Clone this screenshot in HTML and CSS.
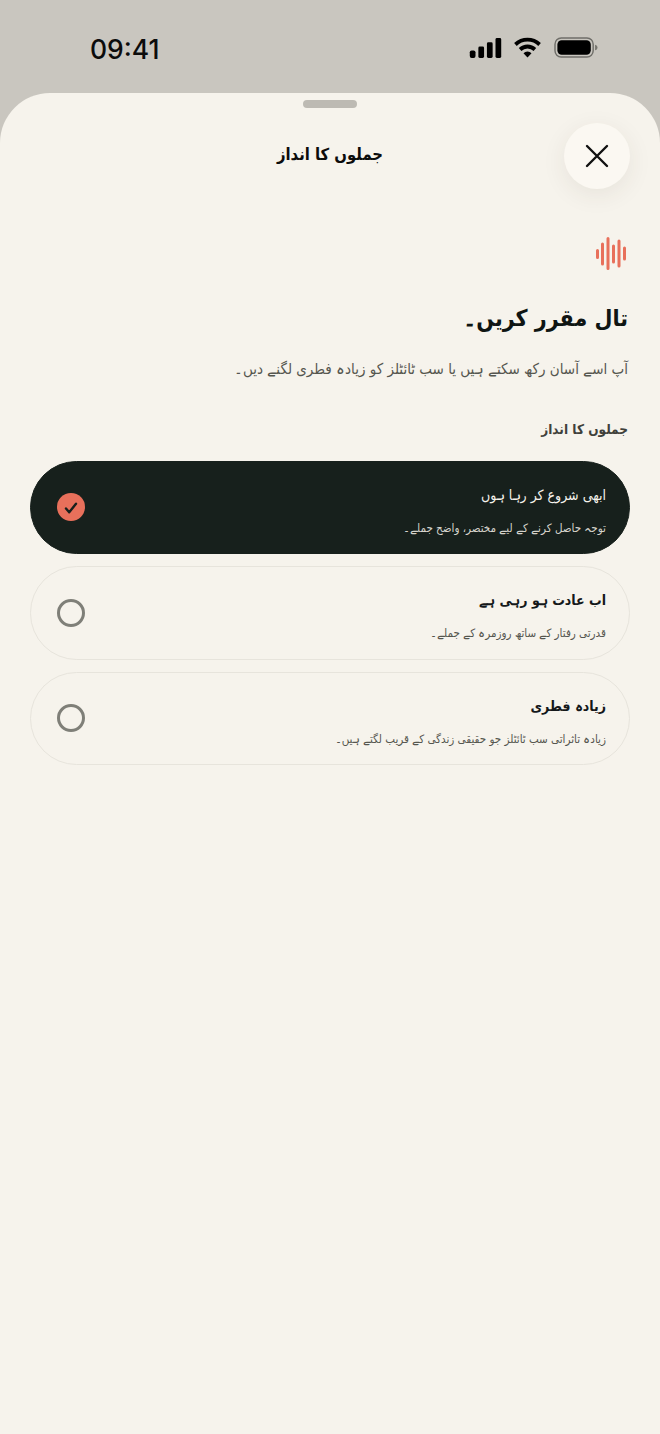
FILE: index.html
```html
<!DOCTYPE html>
<html lang="ur">
<head>
<meta charset="utf-8">
<title>جملوں کا انداز</title>
<link rel="stylesheet" href="styles.css">
</head>
<body>
<div class="screen">
  <header class="status">
    <span class="time">09:41</span>
    <div class="status-icons">
      <svg class="signal" viewBox="0 0 33 21" width="33" height="20"><rect x="0" y="13" width="6" height="8" rx="2"/><rect x="9" y="9" width="6" height="12" rx="1.500"/><rect x="18" y="4.500" width="6" height="16.500" rx="1.500"/><rect x="27" y="0" width="6" height="21" rx="1.500"/></svg>
      <svg class="wifi" viewBox="0 0 30 22" width="29" height="21"><path d="M15 21.500l-4.200-4.600a6 6 0 0 1 8.400 0z"/><path d="M8.600 14.600l-2.700-3a13 13 0 0 1 18.200 0l-2.700 3a9 9 0 0 0-12.800 0z"/><path d="M3.700 9.300L1 6.400a20 20 0 0 1 28 0l-2.700 2.900a16 16 0 0 0-22.600 0z"/></svg>
      <svg class="battery" viewBox="0 0 46 22" width="46" height="21"><rect x="1" y="1" width="40" height="20" rx="6.500" fill="none" stroke="#6f6e69" stroke-width="1.500"/><rect x="3.500" y="3.500" width="35" height="15" rx="4.500"/><path d="M43 8c1.600.4 2.500 1.600 2.500 3s-.9 2.600-2.500 3z" fill="#77766f"/></svg>
    </div>
  </header>
  <main class="sheet">
    <div class="grabber"></div>
    <div class="topbar">
      <h1 class="sheet-title">جملوں کا انداز</h1>
      <button class="close" aria-label="بند کریں">
        <svg viewBox="0 0 26 26" width="26" height="26"><path d="M3 3l20 20M23 3L3 23"/></svg>
      </button>
    </div>
    <section class="content">
      <svg class="wave" viewBox="0 0 30 34" width="30" height="34"><path d="M1.500 13.500v7M6.500 7v20M12 1.500v30M17.500 9v16M23 4v25M28.500 11v11"/></svg>
      <h2 class="heading">تال مقرر کریں۔</h2>
      <p class="sub">آپ اسے آسان رکھ سکتے ہیں یا سب ٹائٹلز کو زیادہ فطری لگنے دیں۔</p>
      <h3 class="label">جملوں کا انداز</h3>
      <div class="options">
        <div class="option selected">
          <div class="text">
            <div class="opt-title">ابھی شروع کر رہا ہوں</div>
            <div class="opt-desc">توجہ حاصل کرنے کے لیے مختصر، واضح جملے۔</div>
          </div>
          <span class="check"><svg viewBox="0 0 16 16" width="16" height="16"><path d="M3 9.500l3.200 3.800L13 4.800"/></svg></span>
        </div>
        <div class="option">
          <div class="text">
            <div class="opt-title">اب عادت ہو رہی ہے</div>
            <div class="opt-desc">قدرتی رفتار کے ساتھ روزمرہ کے جملے۔</div>
          </div>
          <span class="radio"></span>
        </div>
        <div class="option">
          <div class="text">
            <div class="opt-title">زیادہ فطری</div>
            <div class="opt-desc">زیادہ تاثراتی سب ٹائٹلز جو حقیقی زندگی کے قریب لگتے ہیں۔</div>
          </div>
          <span class="radio"></span>
        </div>
      </div>
    </section>
  </main>
</div>
</body>
</html>
```
FILE: styles.css
```css
* { box-sizing: border-box; margin: 0; padding: 0; }
html, body { height: 100%; }
body {
  background: #c9c6bf;
  font-family: "DejaVu Sans Condensed", "DejaVu Sans", "Noto Sans", sans-serif;
  color: #111;
}
.screen { width: 660px; height: 1434px; display: flex; flex-direction: column; overflow: hidden; }
.status {
  height: 93px;
  flex: none;
  display: flex;
  justify-content: space-between;
  align-items: flex-start;
  padding: 33px 61px 0 90px;
}
.time { font: 500 26.500px/32px Inter, "Liberation Sans", sans-serif; color: #0c0c0c; }
.status-icons { display: flex; align-items: center; gap: 11px; margin-top: 4px; }
.status-icons svg { display: block; fill: #000; }
.sheet {
  flex: 1;
  background: #f6f3ec;
  border-radius: 50px 50px 0 0;
  padding: 7px 30px 0;
  display: flex;
  flex-direction: column;
}
.grabber { width: 54px; height: 8px; border-radius: 4px; background: #bdbab3; align-self: center; flex: none; }
.topbar {
  margin-top: 15px;
  height: 66px;
  display: flex;
  align-items: center;
  justify-content: center;
  position: relative;
  flex: none;
}
.sheet-title { direction: rtl; font-size: 16.500px; font-weight: 700; line-height: 30px; color: #0c0c0c; margin-top: -2px; }
.close {
  position: absolute;
  right: 0;
  top: 0;
  width: 66px;
  height: 66px;
  border: 0;
  border-radius: 50%;
  background: #fbf8f2;
  box-shadow: 0 6px 24px rgba(60, 55, 40, .08);
  display: flex;
  align-items: center;
  justify-content: center;
}
.close svg { fill: none; stroke: #111; stroke-width: 2.400; stroke-linecap: round; }
.content { direction: rtl; display: flex; flex-direction: column; align-items: stretch; padding-top: 48px; }
.wave { display: block; fill: none; stroke: #e8705b; stroke-width: 3; stroke-linecap: round; margin-right: 4px; align-self: flex-start; }
.heading { font-size: 23px; font-weight: 700; line-height: 42px; color: #0f1513; margin-top: 26px; padding-right: 2px; }
.sub { font-size: 15px; line-height: 28px; color: #55564f; margin-top: 16px; padding-right: 2px; }
.label { font-size: 13.500px; font-weight: 700; line-height: 28px; color: #3f403a; margin-top: 32px; padding-right: 2px; }
.options { display: flex; flex-direction: column; gap: 12px; margin-top: 17.500px; }
.option {
  height: 93.500px;
  border-radius: 46.750px;
  border: 1.500px solid #e7e4dc;
  display: flex;
  align-items: center;
  justify-content: space-between;
  padding: 0 23px 0 26px;
}
.option.selected { background: #17201c; border-color: #17201c; }
.text { padding-top: 6px; }
.opt-title { font-size: 14px; font-weight: 700; line-height: 26px; color: #14181a; }
.opt-desc { font-size: 11.500px; line-height: 22px; color: #55564f; margin-top: 9px; }
.selected .opt-title { color: #f6f3ec; font-weight: 400; }
.selected .opt-desc { color: #d6d4cc; }
.check, .radio { width: 28px; height: 28px; border-radius: 50%; flex: none; display: flex; align-items: center; justify-content: center; }
.check { background: #e8705b; }
.check svg { fill: none; stroke: #17201c; stroke-width: 2.400; stroke-linecap: round; stroke-linejoin: round; }
.radio { border: 3px solid #7f7f78; }
```
